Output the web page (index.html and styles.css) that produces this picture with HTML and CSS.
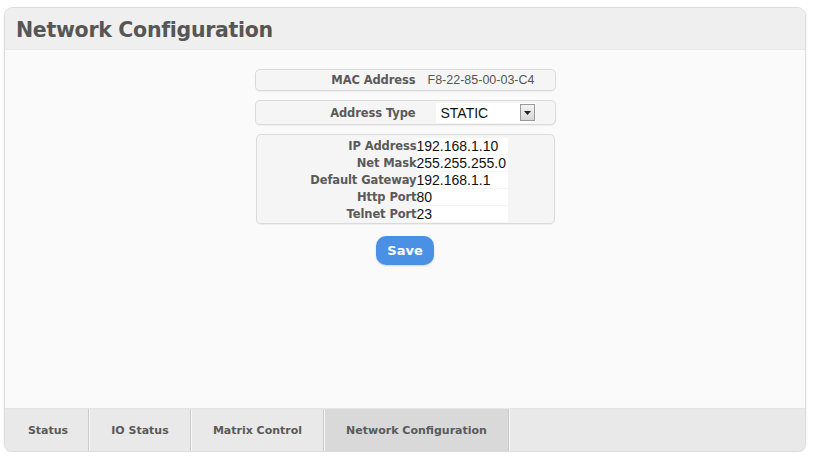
FILE: index.html
```html
<!DOCTYPE html>
<html>
<head>
<meta charset="utf-8">
<link rel="stylesheet" href="styles.css">
</head>
<body>
<div class="panel">
  <div class="header"><h1 class="title">Network Configuration</h1></div>
  <div class="content">
    <div class="box row-box">
      <span class="label">MAC Address</span>
      <span class="mac">F8-22-85-00-03-C4</span>
    </div>
    <div class="box row-box type-box">
      <span class="label">Address Type</span>
      <div class="select"><span class="sel-text">STATIC</span><span class="sel-btn"><svg width="7" height="4" viewBox="0 0 7 4"><path d="M0 0H7L3.5 4Z" fill="#222"/></svg></span></div>
    </div>
    <div class="box grid-box">
      <span class="label">IP Address</span><span class="input">192.168.1.10</span>
      <span class="label">Net Mask</span><span class="input">255.255.255.0</span>
      <span class="label">Default Gateway</span><span class="input">192.168.1.1</span>
      <span class="label">Http Port</span><span class="input">80</span>
      <span class="label">Telnet Port</span><span class="input">23</span>
    </div>
    <button class="save">Save</button>
  </div>
  <div class="tabs">
    <div class="tab">Status</div>
    <div class="tab">IO Status</div>
    <div class="tab">Matrix Control</div>
    <div class="tab active">Network Configuration</div>
  </div>
</div>
</body>
</html>
```
FILE: styles.css
```css
html, body { margin: 0; padding: 0; background: #ffffff; }
body { font-family: "DejaVu Sans", sans-serif; color: #555; }
.panel {
  margin: 7px 7px 0 4px;
  width: 800px;
  height: 443px;
  border: 1px solid #dcdcdc;
  border-radius: 9px;
  background: #fafafa;
  display: flex;
  flex-direction: column;
  overflow: hidden;
  box-shadow: 0 1px 2px rgba(0,0,0,0.12);
}
.header {
  height: 42px;
  box-sizing: border-box;
  padding-top: 3px;
  background: #efefef;
  border-bottom: 1px solid #e9e9e9;
  display: flex;
  align-items: center;
  padding-left: 11px;
}
.title {
  margin: 0;
  font-size: 20.5px;
  font-weight: bold;
  color: #565656;
  letter-spacing: -0.3px;
}
.content {
  flex: 1;
  display: flex;
  flex-direction: column;
  align-items: center;
  padding-top: 19px;
}
.box {
  width: 299px;
  border: 1px solid #dadada;
  border-radius: 5px;
  background: #f5f5f5;
  box-shadow: 0 1px 1px rgba(0,0,0,0.05);
}
.row-box {
  height: 20px;
  display: grid;
  grid-template-columns: 160px 1fr;
  align-items: center;
  margin-bottom: 9px;
}
.type-box { height: 23px; margin-bottom: 9px; }
.label {
  text-align: right;
  font-size: 11.5px;
  font-weight: bold;
  color: #5a5a5a;
  white-space: nowrap;
  letter-spacing: -0.1px;
}
.mac {
  padding-left: 12px;
  font-family: "Liberation Sans", Arial, sans-serif;
  font-size: 12.5px;
  color: #555;
}
.select {
  margin-left: 20px;
  width: 100px;
  height: 20px;
  background: #fff;
  display: flex;
  align-items: center;
  justify-content: space-between;
}
.sel-text {
  font-family: "Liberation Sans", Arial, sans-serif;
  font-size: 14px;
  color: #111;
  padding-left: 5px;
}
.sel-btn {
  width: 13px;
  height: 15px;
  margin-right: 1px;
  border: 1px solid #999;
  background: linear-gradient(#f4f4f4, #d6d6d6);
  display: flex;
  align-items: center;
  justify-content: center;
}
.grid-box {
  height: 90px;
  box-sizing: border-box;
  padding-top: 2px;
  display: grid;
  grid-template-columns: 160px 91px;
  grid-auto-rows: 17px;
  align-items: center;
}
.input {
  height: 16px;
  background: #fff;
  font-family: "Liberation Sans", Arial, sans-serif;
  font-size: 14px;
  line-height: 16px;
  color: #111;
}
.save {
  margin-top: 12px;
  width: 58px;
  height: 29px;
  border: none;
  border-radius: 10px;
  background: #4a91e6;
  color: #fff;
  font-family: "DejaVu Sans", sans-serif;
  font-weight: bold;
  font-size: 13px;
  box-shadow: 0 1px 2px rgba(0,0,0,0.15);
}
.tabs {
  height: 42px;
  background: #e9e9e9;
  display: flex;
  padding-left: 3px;
  border-top: 1px solid #e4e4e4;
}
.tab {
  display: flex;
  align-items: center;
  justify-content: center;
  font-size: 11px;
  font-weight: bold;
  color: #5a5a5a;
  border-right: 1px solid #c9c9c9;
  box-shadow: 1px 0 0 #f8f8f8;
  margin-right: 1px;
}
.tab:nth-child(1) { width: 80px; }
.tab:nth-child(2) { width: 100px; }
.tab:nth-child(3) { width: 131px; }
.tab:nth-child(4) { width: 183px; }
.tab.active { background: #d9d9d9; }
```
